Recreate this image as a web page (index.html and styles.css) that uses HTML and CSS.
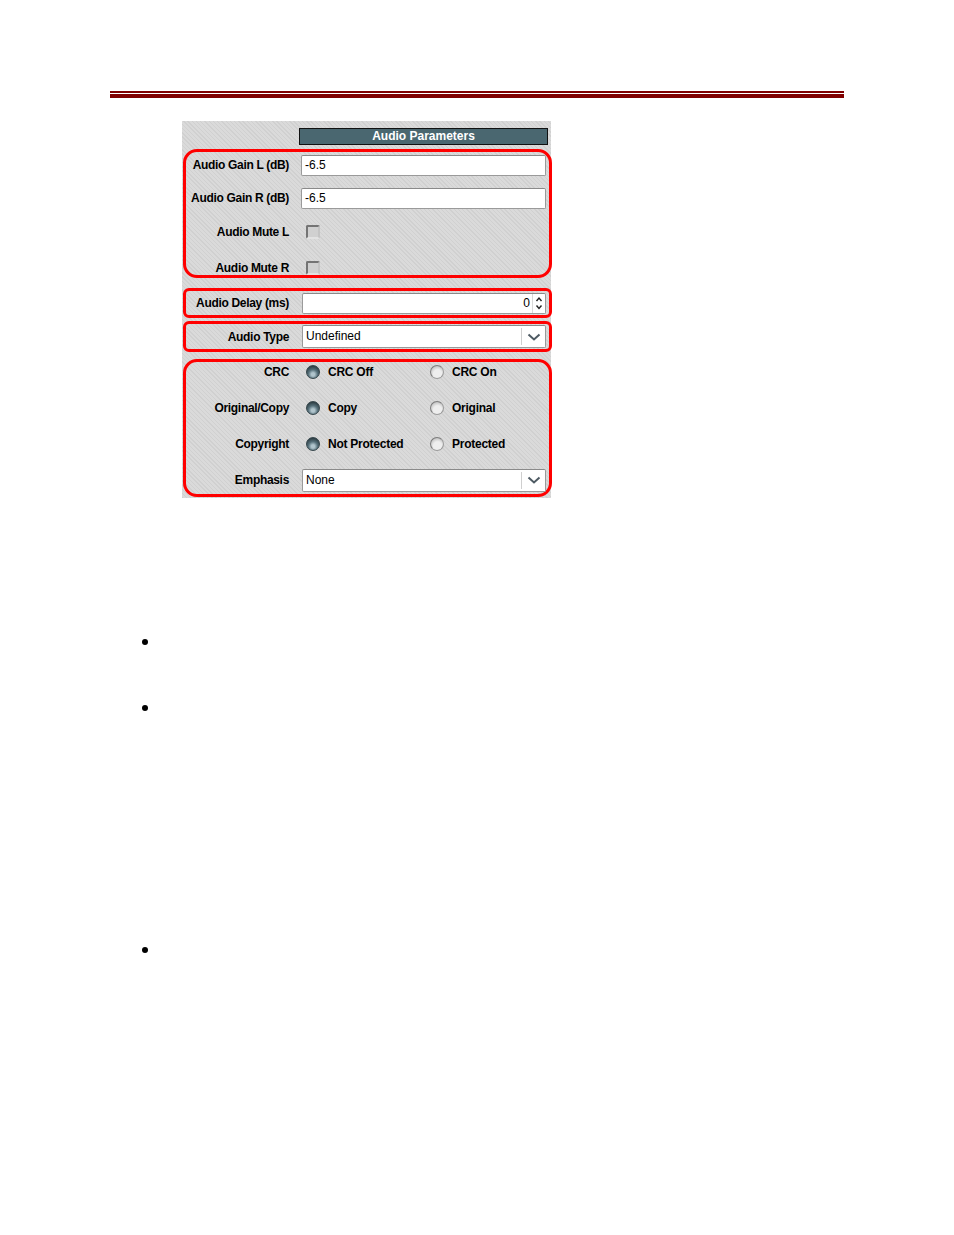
FILE: index.html
```html
<!DOCTYPE html>
<html>
<head>
<meta charset="utf-8">
<link rel="stylesheet" href="styles.css">
</head>
<body>
<div class="page">
  <div class="rule"><div class="rule-thin"></div><div class="rule-thick"></div></div>

  <div class="panel">
    <div class="header">Audio Parameters</div>

    <div class="group group-big g1">
      <div class="row r1"><div class="label">Audio Gain L (dB)</div><div class="ctl"><div class="field">-6.5</div></div></div>
      <div class="row r2"><div class="label">Audio Gain R (dB)</div><div class="ctl"><div class="field">-6.5</div></div></div>
      <div class="row r3"><div class="label">Audio Mute L</div><div class="ctl"><span class="check"></span></div></div>
      <div class="row r4"><div class="label">Audio Mute R</div><div class="ctl"><span class="check"></span></div></div>
    </div>

    <div class="group group-small g2">
      <div class="row r-delay"><div class="label">Audio Delay (ms)</div><div class="ctl">
        <div class="field spin"><span class="num">0</span><span class="spinner"><svg width="8" height="16" viewBox="0 0 8 16"><path d="M1.5 6 L4 3 L6.5 6" fill="none" stroke="#222" stroke-width="1.4"/><path d="M1.5 10.5 L4 13.5 L6.5 10.5" fill="none" stroke="#222" stroke-width="1.4"/></svg></span></div>
      </div></div>
    </div>

    <div class="group group-small g3">
      <div class="row r-type"><div class="label">Audio Type</div><div class="ctl">
        <div class="field select"><span class="val">Undefined</span><span class="arrow"><svg width="14" height="10" viewBox="0 0 14 10"><path d="M1.5 2.5 L7 7.5 L12.5 2.5" fill="none" stroke="#4e5a63" stroke-width="2"/></svg></span></div>
      </div></div>
    </div>

    <div class="group group-big g4">
      <div class="row rr"><div class="label">CRC</div><div class="ctl radios">
        <div class="opt"><span class="radio on"></span>CRC Off</div>
        <div class="opt"><span class="radio"></span>CRC On</div>
      </div></div>
      <div class="row rr"><div class="label">Original/Copy</div><div class="ctl radios">
        <div class="opt"><span class="radio on"></span>Copy</div>
        <div class="opt"><span class="radio"></span>Original</div>
      </div></div>
      <div class="row rr"><div class="label">Copyright</div><div class="ctl radios">
        <div class="opt"><span class="radio on"></span>Not Protected</div>
        <div class="opt"><span class="radio"></span>Protected</div>
      </div></div>
      <div class="row rr"><div class="label">Emphasis</div><div class="ctl">
        <div class="field select"><span class="val">None</span><span class="arrow"><svg width="14" height="10" viewBox="0 0 14 10"><path d="M1.5 2.5 L7 7.5 L12.5 2.5" fill="none" stroke="#4e5a63" stroke-width="2"/></svg></span></div>
      </div></div>
    </div>
  </div>

  <div class="bullets">
    <div class="bullet b1"><span class="dot"></span></div>
    <div class="bullet b2"><span class="dot"></span></div>
    <div class="bullet b3"><span class="dot"></span></div>
  </div>
</div>
</body>
</html>
```

FILE: styles.css
```css
html, body {
  margin: 0;
  padding: 0;
  background: #ffffff;
}
body {
  font-family: "Liberation Sans", Arial, sans-serif;
  color: #000;
}
.page {
  width: 954px;
  height: 1235px;
  overflow: hidden;
}
.rule {
  margin-left: 110px;
  width: 734px;
  padding-top: 91px;
}
.rule-thin {
  height: 2px;
  background: #800000;
}
.rule-thick {
  margin-top: 1px;
  height: 4px;
  background: #800000;
}

.panel {
  margin-left: 182px;
  margin-top: 23px;
  width: 369px;
  height: 377px;
  box-sizing: border-box;
  padding: 7px 0 0 1px;
  background-color: #d6d6d6;
  background-image: repeating-linear-gradient(45deg, #d0d0d0 0 1px, #dadada 1px 3px);
}
.header {
  margin-left: 116px;
  width: 249px;
  height: 17px;
  box-sizing: border-box;
  background: #4a6770;
  border: 1px solid #111;
  color: #fff;
  font-weight: bold;
  font-size: 12px;
  line-height: 15px;
  text-align: center;
}

.group {
  width: 369px;
  box-sizing: border-box;
  border: 3px solid #ff0000;
  padding: 0 3px 0 0;
}
.group-big {
  border-radius: 14px;
}
.group-small {
  border-radius: 6px;
}
.g1 {
  margin-top: 4px;
  height: 129px;
}
.g2 {
  margin-top: 10px;
  height: 30px;
}
.g3 {
  margin-top: 3px;
  height: 31px;
}
.g4 {
  margin-top: 7px;
  height: 138px;
}

.row {
  display: flex;
  align-items: center;
}
.label {
  width: 103px;
  flex: none;
  text-align: right;
  font-weight: bold;
  font-size: 12px;
  letter-spacing: -0.32px;
  white-space: nowrap;
}
.ctl {
  margin-left: 12px;
  flex: 1;
  display: flex;
  align-items: center;
}
.r1 { height: 26px; }
.r2 { height: 26px; margin-top: 7px; }
.r3 { height: 14px; margin-top: 14px; }
.r4 { height: 14px; margin-top: 22px; }
.r-delay { height: 24px; }
.r-type { height: 25px; }
.rr { height: 20px; }
.rr + .rr { margin-top: 16px; }

.field {
  width: 245px;
  height: 21px;
  box-sizing: border-box;
  background: #fff;
  border: 1px solid #9a9a9a;
  border-top-color: #8a8a8a;
  border-radius: 2px;
  font-size: 12px;
  line-height: 19px;
  padding-left: 3px;
  display: flex;
  align-items: center;
}
.spin {
  margin-left: 1px;
  width: 244px;
  justify-content: flex-end;
  padding-left: 0;
}
.spin .num {
  margin-right: 2px;
}
.spin .spinner {
  width: 12px;
  height: 19px;
  display: flex;
  align-items: center;
  justify-content: center;
  border-left: 1px solid #d8d8d8;
}
.select {
  margin-left: 1px;
  width: 244px;
  height: 23px;
}
.select .val {
  flex: 1;
}
.select .arrow {
  width: 23px;
  height: 17px;
  border-left: 1px solid #cfcfcf;
  display: flex;
  align-items: center;
  justify-content: center;
}

.check {
  display: inline-block;
  width: 14px;
  height: 14px;
  box-sizing: border-box;
  margin-left: 5px;
  border-radius: 2px;
  border: 2px solid #9a9a9a;
  border-top-color: #747474;
  border-left-color: #747474;
  border-right-color: #c4c4c4;
  border-bottom-color: #e2e2e2;
  background: #d0d0d0;
}

.radios .opt {
  width: 124px;
  display: flex;
  align-items: center;
  font-weight: bold;
  font-size: 12px;
  letter-spacing: -0.25px;
  white-space: nowrap;
}
.radios .opt:first-child { margin-left: 5px; }
.radio {
  width: 14px;
  height: 14px;
  border-radius: 50%;
  box-sizing: border-box;
  margin-right: 8px;
  flex: none;
  border: 1px solid #9c9c9c;
  border-top-color: #7c7c7c;
  border-left-color: #7c7c7c;
  background: radial-gradient(circle at 55% 65%, #eeeeee 0 40%, #cacaca 70%, #a8a8a8 100%);
}
.radio.on {
  border: 1px solid #34444a;
  background: radial-gradient(circle at 50% 70%, #b0c4cc 0 16%, #56707a 45%, #2a3a40 82%);
}

.bullets {
  margin-top: 141px;
  margin-left: 142px;
}
.bullet {
  height: 6px;
  display: flex;
}
.dot {
  width: 6px;
  height: 6px;
  border-radius: 50%;
  background: #000;
}
.b2 { margin-top: 60px; }
.b3 { margin-top: 236px; }
```
